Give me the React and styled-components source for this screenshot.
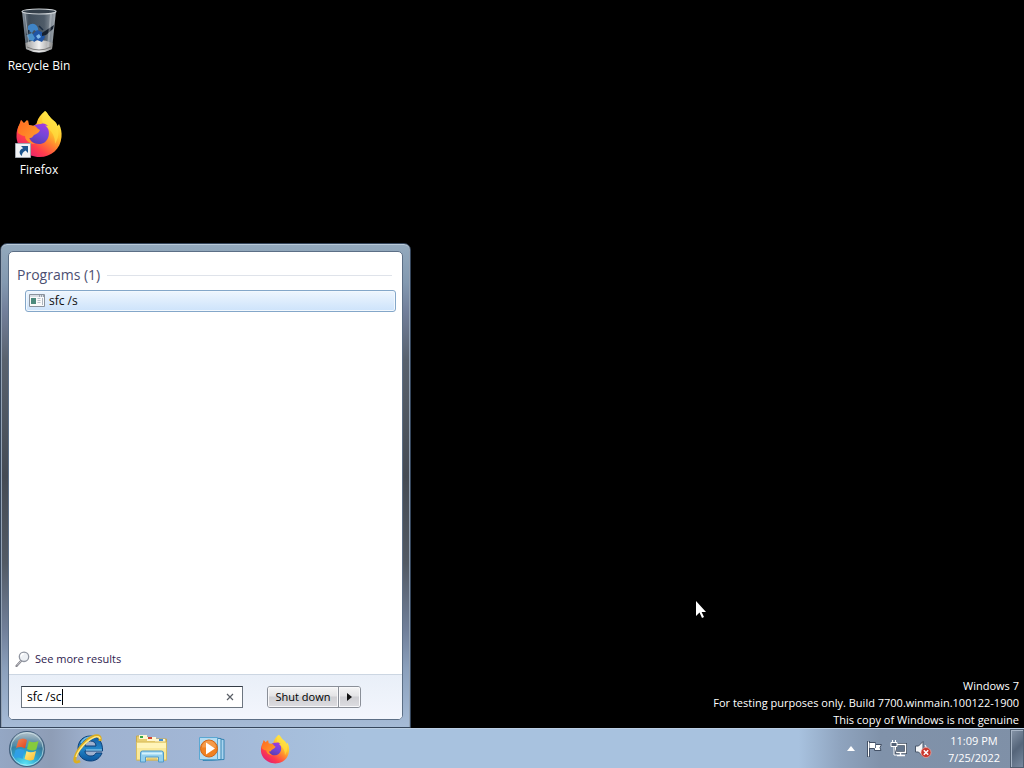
import React, { Component } from 'react'
import styled, { createGlobalStyle, css } from 'styled-components'

const GlobalStyle = createGlobalStyle`
  * {
    box-sizing: border-box;
  }

  body {
    margin: 0;
    background: #000;
    font-family: "Open Sans", "Noto Sans", sans-serif;
    font-size: 11px;
    line-height: 16px;
  }

  button, input {
    font: inherit;
  }
`

const Screen = styled.div`
  display: flex;
  flex-direction: column;
  min-height: 100vh;
`

const Desktop = styled.main`
  position: relative;
  flex: 1;
  overflow: hidden;
`

const Shortcuts = styled.nav`
  display: flex;
  flex-direction: column;
  align-items: flex-start;
  gap: 32px;
  padding-top: 6px;
`

const Shortcut = styled.a`
  display: flex;
  flex-direction: column;
  align-items: center;
  gap: 4px;
  width: 78px;
  height: 72px;
  color: #fff;
  font-size: 12px;
  text-decoration: none;
  text-shadow: 0 1px 2px #000;
`

const Watermark = styled.div`
  position: absolute;
  right: 5px;
  bottom: 0;
  color: #fff;
  text-align: right;
  line-height: 17px;

  p {
    margin: 0;
  }
`

const Pointer = styled.svg`
  position: absolute;
  left: 695px;
  top: 600px;
`

const StartMenu = styled.section`
  position: absolute;
  left: 0;
  bottom: 0;
  display: flex;
  width: 411px;
  height: 485px;
  padding: 7px;
  border: 1px solid #35465c;
  border-radius: 7px 7px 0 0;
  background: linear-gradient(#93a9bd, #8399b0 8%, #727f9a 14%, #59626e 24%, #454b54 48%, #525a64 66%, #71809a 80%, #8ba0bc 88%, #a6bbd6);
  box-shadow: inset 0 1px 0 #b9c9d8, inset 1px 0 0 #93a2b4, inset -1px 0 0 #93a2b4;
`

const Panel = styled.div`
  display: flex;
  flex-direction: column;
  flex: 1;
  border: 1px solid #5c6f86;
  border-radius: 5px;
  background: #fff;
  overflow: hidden;
`

const Results = styled.div`
  flex: 1;
  padding: 12px 6px 0 8px;
`

const GroupTitle = styled.h2`
  display: flex;
  align-items: center;
  gap: 7px;
  margin: 0 4px 4px 0;
  color: #4c4f72;
  font-size: 14px;
  font-weight: 400;
  line-height: 22px;

  &::after {
    content: '';
    flex: 1;
    height: 1px;
    background: #dfe3ea;
  }
`

const ResultItem = styled.button`
  display: flex;
  align-items: center;
  gap: 4px;
  width: calc(100% - 8px);
  height: 22px;
  margin-left: 8px;
  padding: 0 3px;
  border: 1px solid #84a7c9;
  border-radius: 3px;
  background: linear-gradient(#eef6fe, #cde3fb);
  box-shadow: inset 0 0 0 1px #f2f8fe;
  color: #111;
  font-size: 12px;
`

const MoreResults = styled.a`
  display: flex;
  align-items: center;
  gap: 4px;
  padding: 0 6px 7px;
  color: #2e1a4f;
  text-decoration: none;
`

const Footer = styled.form`
  display: flex;
  align-items: center;
  gap: 24px;
  height: 45px;
  padding: 0 12px;
  border-top: 1px solid #ccd6e2;
  background: linear-gradient(#e9eff8, #f3f6fd);
`

const SearchBox = styled.div`
  position: relative;
  display: flex;
  align-items: center;
  width: 222px;
  height: 22px;
  border: 1px solid #6c7580;
  border-top-color: #333b45;
  background: #fff;
  font-size: 12px;
`

const SearchInput = styled.input`
  flex: 1;
  min-width: 0;
  padding: 0 5px;
  border: 0;
  outline: 0;
  background: transparent;
  color: #000;
`

const Caret = styled.span`
  position: absolute;
  left: 5px;
  top: 2px;
  border-right: 1px solid #000;
  color: transparent;
  white-space: pre;
  pointer-events: none;
`

const ClearButton = styled.button`
  display: flex;
  padding: 0 8px;
  border: 0;
  background: none;
`

const SplitButton = styled.div`
  display: flex;
  height: 22px;
  border: 1px solid #8a8f98;
  border-radius: 3px;
  background: linear-gradient(#f5f5f6, #e4e4e6 45%, #cfcfd3 50%, #dddde1);
  overflow: hidden;
`

const PowerButton = styled.button`
  display: flex;
  align-items: center;
  justify-content: center;
  width: ${({ $narrow }) => ($narrow ? '22px' : '70px')};
  padding: 0;
  border: 0;
  background: none;
  box-shadow: inset 0 0 0 1px #f8f8fa;
  color: #000;
  ${({ $narrow }) => $narrow && css`
    border-left: 1px solid #8a8f98;
  `}
`

const Taskbar = styled.footer`
  display: flex;
  align-items: center;
  height: 40px;
  border-top: 1px solid #bccfe4;
  background: linear-gradient(90deg, #94a7c4, #8e9db6 5%, #9fb2d0 9%, #a2b7d6 20%, #a8c2df 34%, #a8c2df 78%, #8fa4bf 82%, #8092aa 86%, #7f90a7);
`

const Pinned = styled.nav`
  display: flex;
  flex: 1;
`

const TaskButton = styled.button`
  display: flex;
  align-items: center;
  justify-content: center;
  width: ${({ $start }) => ($start ? '58px' : '62px')};
  height: 39px;
  padding: ${({ $start }) => ($start ? '0 4px 0 0' : '0')};
  border: 0;
  background: none;
`

const Tray = styled.div`
  display: flex;
  align-items: center;
  gap: 6px;
`

const TrayButton = styled.button`
  display: flex;
  align-items: center;
  justify-content: center;
  width: 18px;
  height: 18px;
  padding: 0;
  border: 0;
  background: none;
`

const Clock = styled.time`
  padding: 0 10px;
  color: #fff;
  text-align: center;
  line-height: 17px;

  span {
    display: block;
  }
`

const ShowDesktop = styled.button`
  width: 14px;
  height: 39px;
  padding: 0;
  border: 1px solid #4f5e70;
  background: linear-gradient(135deg, #8796a9, #55657a 50%, #78899f);
  box-shadow: inset 1px 1px 0 #a7b5c6;
`

const RecycleIcon = () => (
  <svg width="48" height="48" viewBox="0 0 48 48" aria-hidden="true">
    <defs>
      <linearGradient id="binGlass">
        <stop offset="0" stopColor="#8d98a3" />
        <stop offset=".2" stopColor="#3f4c59" />
        <stop offset=".65" stopColor="#4e5b68" />
        <stop offset="1" stopColor="#a9b0b7" />
      </linearGradient>
      <linearGradient id="binBase">
        <stop offset="0" stopColor="#9a9a9a" />
        <stop offset=".5" stopColor="#f2f2f2" />
        <stop offset="1" stopColor="#8c8c8c" />
      </linearGradient>
    </defs>
    <path d="M7 5 L11 43 Q24 50 37 43 L41 5Z" fill="url(#binGlass)" />
    <path d="M10.5 37 Q24 31 37.600 37 L37 43 Q24 50 11 43Z" fill="url(#binBase)" />
    <path d="M12 41 Q24 47 36 41" fill="none" stroke="#777" />
    <path d="M13 20q4-4 8-1 3 3 2 7l-4-2-2 3-4-3z" fill="#3f84c6" />
    <path d="M18 28l4-4 5 2 3 5-3 5-5-2-3 2-3-4z" fill="#1f55a5" />
    <path d="M12 29l5-2 3 5-2 3-4-1z" fill="#4a91ca" />
    <path d="M21 30l3-2 2 3-3 2z" fill="#7fb8e8" />
    <path d="M27 27l6-4 6-4-1 4-7 6-4 1z" fill="#16202e" />
    <path d="M14 24l-2 5M24 20l4 4" stroke="#1a2b40" strokeWidth="1.500" />
    <path d="M10 8 L14 39" stroke="#c6ced5" opacity=".55" />
    <path d="M36 8 L33 41" stroke="#dce2e7" strokeWidth="2" opacity=".35" />
    <ellipse cx="24" cy="5.500" rx="17" ry="2.500" fill="#333e49" stroke="#ced3d7" strokeWidth="1.200" />
  </svg>
)

const FirefoxIcon = ({ size, name, shortcut }) => (
  <svg width={size} height={size} viewBox="0 0 48 48" aria-hidden="true">
    <defs>
      <linearGradient id={`${name}Body`} x1=".85" y1=".1" x2=".2" y2=".95">
        <stop offset="0" stopColor="#fff44f" />
        <stop offset=".3" stopColor="#ffc42c" />
        <stop offset=".52" stopColor="#ff8030" />
        <stop offset=".75" stopColor="#ff3c4d" />
        <stop offset="1" stopColor="#e21e73" />
      </linearGradient>
      <linearGradient id={`${name}Globe`} x1=".7" y1="0" x2=".3" y2="1">
        <stop offset="0" stopColor="#a03be0" />
        <stop offset=".5" stopColor="#7346d8" />
        <stop offset="1" stopColor="#5a3daf" />
      </linearGradient>
      <linearGradient id={`${name}Head`} x1="0" y1="0" x2="1" y2="1">
        <stop offset="0" stopColor="#ff6a20" />
        <stop offset="1" stopColor="#ffa42e" />
      </linearGradient>
    </defs>
    <path d="M30 1c3 2 4 6 8 9 3 2 4 4 4.500 6l1.500-2c2 4 3 8 2.500 13-1 12-10 20-22 20S2 38 1.500 27c-.2-6 1-10 4-14l.5-3 3 3 3-3 1 5 5 1c3-1 4-3 4-4 1-4 4-8 8-11z" fill={`url(#${name}Body)`} />
    <path d="M30 1c3 2 4 6 8 9 7 7 7 16 2 24 0-8-3-13-9-17-5-4-5-10-1-16z" fill="#ffe044" opacity=".65" />
    <path d="M17 17c2-2 5-3 9-3 3-1 5 0 7 2l-3-.500c4 2.500 4.500 7 3.500 11-1.500 5-5 7.500-9.500 7.500-6 0-10-4-10-9 0-3 1-6 3-8z" fill={`url(#${name}Globe)`} />
    <path d="M3 18L6 10l3 4 4-4 1 5 6 1c2 1 2 3 5 4-1 3-4 4-6 5-2 2-1 3-5 3 1 3 3 5 6 6-6 0-10-4-10-8-3 0-5-2-7-3z" fill={`url(#${name}Head)`} />
    {shortcut && (
      <g>
        <path d="M.5 33.500h15v14h-15z" fill="#f1f3f5" stroke="#a2a8b0" />
        <path d="M6 36h7v7l-2.400-2.400c-3 1.600-3.600 3-3.600 5.400-4-3-2.500-6.500 1.200-7.800z" fill="#1d568f" />
      </g>
    )}
  </svg>
)

const AppIcon = () => (
  <svg width="16" height="14" viewBox="0 0 16 14" aria-hidden="true">
    <path d="M.5 .5h15v12H.5z" fill="#fafafa" stroke="#8a929c" />
    <path d="M1 1h14v2H1z" fill="#d9dee4" />
    <path d="M10 2h1M12 2h1M14 2h1" stroke="#5d6978" />
    <path d="M2 4h5v6H2z" fill="#4c8a7d" />
    <path d="M8.500 4.500h3M8.500 6.500h3M8.500 8.500h3" stroke="#b8c1ca" />
    <path d="M13.500 4v7" stroke="#aeb6bf" />
  </svg>
)

const LensIcon = () => (
  <svg width="16" height="16" viewBox="0 0 16 16" aria-hidden="true">
    <path d="M6 10L1.500 15" stroke="#85858c" strokeWidth="2.200" strokeLinecap="round" />
    <path d="M6 10L2 14.400" stroke="#d8d8dd" strokeWidth=".8" />
    <circle cx="9" cy="5.800" r="4.700" fill="#eef1f5" stroke="#9196a1" strokeWidth="1.300" />
    <path d="M6 5.500a3 3 0 0 1 3-2.700" fill="none" stroke="#fff" strokeWidth="1.500" />
  </svg>
)

const StartOrb = () => (
  <svg width="38" height="38" viewBox="0 0 38 38" aria-hidden="true">
    <defs>
      <radialGradient id="orbBack" cx=".45" cy=".95" r=".95">
        <stop offset="0" stopColor="#5fe6f6" />
        <stop offset=".4" stopColor="#2ba3cc" />
        <stop offset=".75" stopColor="#3b7391" />
        <stop offset="1" stopColor="#6d8a9a" />
      </radialGradient>
      <linearGradient id="orbShine" x2="0" y2="1">
        <stop offset="0" stopColor="#fff" stopOpacity=".9" />
        <stop offset="1" stopColor="#fff" stopOpacity=".1" />
      </linearGradient>
      <linearGradient id="orbRed" x2="1" y2="1">
        <stop offset="0" stopColor="#f08a5a" />
        <stop offset="1" stopColor="#e2421c" />
      </linearGradient>
      <linearGradient id="orbYellow" x2="1" y2="1">
        <stop offset="0" stopColor="#fff08a" />
        <stop offset="1" stopColor="#fbb92c" />
      </linearGradient>
    </defs>
    <circle cx="19" cy="19" r="17.500" fill="url(#orbBack)" stroke="#46627f" strokeWidth="1.200" />
    <path d="M3 17C3 7 10 2 19 2s16 5 16 15c-10 3-22-3-32 0z" fill="url(#orbShine)" opacity=".55" />
    <path d="M10.500 10c3-2 6-2 8.500 0l-2 8.500c-3-2-6-2-9-.5z" fill="url(#orbRed)" />
    <path d="M21 11c3 2 6 1.500 9.500 0l-2.200 8.500c-3 1.500-6.500 1-9.300-.5z" fill="#86cb3c" />
    <path d="M7.500 20c3-1.500 6-1.500 9 .5l-2 8.500c-3-2-6-2-9-.5z" fill="#2f9fe6" />
    <path d="M18.500 21c3 2 6 1.500 9.500 0l-2.200 8.500c-3 1.500-6.500 1-9.300-.5z" fill="url(#orbYellow)" />
    <circle cx="19" cy="19" r="16.300" fill="none" stroke="#d5edf3" opacity=".65" />
  </svg>
)

const ExplorerIcon = () => (
  <svg width="32" height="32" viewBox="0 0 32 32" aria-hidden="true">
    <defs>
      <linearGradient id="ieBlue" x2="0" y2="1">
        <stop offset="0" stopColor="#1259a0" />
        <stop offset=".5" stopColor="#2486c8" />
        <stop offset="1" stopColor="#0a569e" />
      </linearGradient>
    </defs>
    <path d="M17.500 3C25 3 30 9 29.500 18H12c0 3 2.500 5 6 5 2.500 0 4-1 5-3h6c-2 5-6 8-11.500 8C10 28 5 23 5 15.500S10 3 17.500 3zM12 13h11c0-3-2-5-5.500-5S12 10 12 13z" fill="url(#ieBlue)" stroke="#0c3f78" />
    <path d="M8 10c2-4 6-6 10-6" fill="none" stroke="#70bde5" strokeWidth="1.500" />
    <path d="M13 17h16" stroke="#a8dcf4" />
    <path d="M27 8c1-4-1-6-5-5C14 5 4 17 2 25c-1 4 1 5 5 3" fill="none" stroke="#dcae20" strokeWidth="3" />
    <path d="M27 6c0-2-2-3-5-2C14 7 5 17 3 24" fill="none" stroke="#ffe88a" strokeWidth="1.400" />
  </svg>
)

const FolderIcon = () => (
  <svg width="34" height="32" viewBox="0 0 34 32" aria-hidden="true">
    <path d="M2.500 3h10l2 3h18v21h-30z" fill="#e9cf71" stroke="#c8a94c" />
    <path d="M5 2h8v4H5zM13 4h9v4h-9zM21 6h10v4H21z" fill="#fff7d0" />
    <path d="M6 3h3v2H6z" fill="#35a748" />
    <path d="M14 4h4v2h-4z" fill="#d64532" />
    <path d="M25 6h4v2h-4z" fill="#448ed0" />
    <path d="M2.500 9h30v18h-30z" fill="#fae99a" stroke="#d7bd61" />
    <path d="M3 10h29v5H3z" fill="#fff4b8" />
    <path d="M6.500 20q0-2 2-2h19q2 0 2 2v9h-5v-5h-13v5h-5z" fill="#92d0ee" stroke="#5299c6" />
    <path d="M8 19.500h20v2H8z" fill="#d5f2fc" />
    <path d="M13 26h10" stroke="#d8b45a" />
  </svg>
)

const MediaIcon = () => (
  <svg width="28" height="28" viewBox="0 0 28 28" aria-hidden="true">
    <path d="M6 2.500l19 2v20l-19 1z" fill="#a9d4ef" stroke="#3685b4" />
    <path d="M4 2.500l18 1v21l-18 1z" fill="#c1e2f4" stroke="#3685b4" />
    <path d="M.5 2.500h18v22h-18z" fill="#b4dcf2" stroke="#5aa7d2" />
    <circle cx="10" cy="13.500" r="8.500" fill="#f08122" stroke="#cf6519" />
    <path d="M3 12.500a7 7 0 0 1 14 0" fill="#f7a75b" opacity=".7" />
    <path d="M7 7.500l9 6-9 6z" fill="#fff" />
  </svg>
)

const FlagIcon = () => (
  <svg width="18" height="18" viewBox="0 0 18 18" aria-hidden="true">
    <path d="M2.500 1v16" stroke="#435166" strokeWidth="3" />
    <path d="M3 2.500h6.500v2h6l-1.500 3 1 3H8.500v-2H3z" fill="#fff" stroke="#435166" />
    <path d="M2.500 1.500v15" stroke="#fff" />
    <path d="M9.500 3v5" stroke="#65748a" />
  </svg>
)

const NetworkIcon = () => (
  <svg width="18" height="18" viewBox="0 0 18 18" aria-hidden="true">
    <path d="M5.500 4.500h10v8h-10z" fill="#64758c" stroke="#3e4b5d" strokeWidth="3" />
    <path d="M5.500 4.500h10v8h-10zM10.500 13v2M7 15.500h8" fill="none" stroke="#fff" strokeWidth="1.400" />
    <path d="M1 2.500h6v4H1zM2.500 0v3M5.500 0v3M4 6v9h3" fill="#536176" stroke="#fff" />
  </svg>
)

const VolumeIcon = () => (
  <svg width="18" height="18" viewBox="0 0 18 18" aria-hidden="true">
    <path d="M1.500 6h3L9 1.500v15L4.500 12h-3z" fill="#f5f6f8" stroke="#49576a" />
    <path d="M11 5q2 2 1 5" fill="none" stroke="#fff" />
    <circle cx="12" cy="12.500" r="5" fill="#c9362c" stroke="#f1aaa4" strokeWidth=".7" />
    <path d="M9.800 10.300l4.400 4.400m0-4.400l-4.400 4.400" stroke="#fff" strokeWidth="1.500" />
  </svg>
)

const pinnedApps = [
  { name: 'Internet Explorer', icon: <ExplorerIcon /> },
  { name: 'Windows Explorer', icon: <FolderIcon /> },
  { name: 'Windows Media Player', icon: <MediaIcon /> },
  { name: 'Firefox', icon: <FirefoxIcon size={30} name="task" /> }
]

const trayIcons = [
  { name: 'Action Center', icon: <FlagIcon /> },
  { name: 'Network', icon: <NetworkIcon /> },
  { name: 'Volume', icon: <VolumeIcon /> }
]

class App extends Component {

  state = {
    query: 'sfc /sc'
  }

  handleChange = (event) => {
    this.setState({
      query: event.target.value
    })
  }

  handleClear = () => {
    this.setState({
      query: ''
    })
  }

  render() {

    const { query } = this.state

    return (
      <Screen>
        <GlobalStyle />
        <Desktop>
          <Shortcuts>
            <Shortcut href="#recycle-bin"><RecycleIcon />Recycle Bin</Shortcut>
            <Shortcut href="#firefox"><FirefoxIcon size={48} name="desk" shortcut />Firefox</Shortcut>
          </Shortcuts>
          <Watermark>
            <p>Windows 7</p>
            <p>For testing purposes only. Build 7700.winmain.100122-1900</p>
            <p>This copy of Windows is not genuine</p>
          </Watermark>
          <StartMenu>
            <Panel>
              <Results>
                <GroupTitle>Programs (1)</GroupTitle>
                <ResultItem><AppIcon />sfc /s</ResultItem>
              </Results>
              <MoreResults href="#results"><LensIcon />See more results</MoreResults>
              <Footer onSubmit={(event) => event.preventDefault()}>
                <SearchBox>
                  <SearchInput type="text" aria-label="Search programs and files" value={query} onChange={this.handleChange} />
                  <Caret aria-hidden="true">{query}</Caret>
                  <ClearButton type="button" aria-label="Clear" onClick={this.handleClear}>
                    <svg width="8" height="8" viewBox="0 0 8 8" aria-hidden="true">
                      <path d="M1 1l6 6m0-6L1 7" stroke="#5a5f66" strokeWidth="1.200" />
                    </svg>
                  </ClearButton>
                </SearchBox>
                <SplitButton>
                  <PowerButton type="button">Shut down</PowerButton>
                  <PowerButton type="button" $narrow aria-label="More power options">
                    <svg width="5" height="8" viewBox="0 0 5 8" aria-hidden="true">
                      <path d="M0 0l5 4-5 4z" fill="#111" />
                    </svg>
                  </PowerButton>
                </SplitButton>
              </Footer>
            </Panel>
          </StartMenu>
          <Pointer width="12" height="19" viewBox="0 0 12 19" aria-hidden="true">
            <path d="M1 1v15l3.500-3.500L7 18l2-1-2.400-5H11z" fill="#fff" />
          </Pointer>
        </Desktop>
        <Taskbar>
          <Pinned>
            <TaskButton $start aria-label="Start"><StartOrb /></TaskButton>
            {pinnedApps.map((item) => (
              <TaskButton key={item.name} aria-label={item.name}>{item.icon}</TaskButton>
            ))}
          </Pinned>
          <Tray>
            <TrayButton aria-label="Show hidden icons">
              <svg width="8" height="5" viewBox="0 0 8 5" aria-hidden="true">
                <path d="M0 5l4-5 4 5z" fill="#fff" />
              </svg>
            </TrayButton>
            {trayIcons.map((item) => (
              <TrayButton key={item.name} aria-label={item.name}>{item.icon}</TrayButton>
            ))}
            <Clock>
              <span>11:09 PM</span>
              <span>7/25/2022</span>
            </Clock>
          </Tray>
          <ShowDesktop aria-label="Show desktop" />
        </Taskbar>
      </Screen>
    )
  }
}

export default App
